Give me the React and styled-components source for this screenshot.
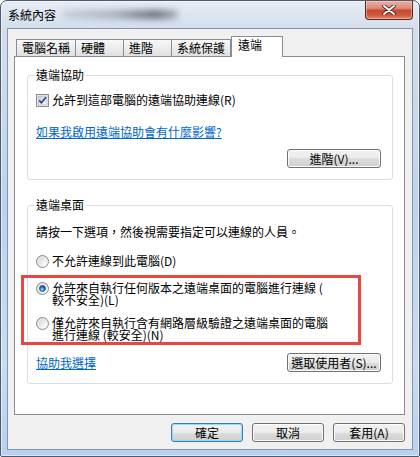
import styled, { createGlobalStyle } from "styled-components";

const GlobalStyle = createGlobalStyle`
  html, body {
    margin: 0;
    padding: 0;
    background: #ffffff;
  }
  body {
    font-family: "Noto Sans CJK TC", "Liberation Sans", sans-serif;
    font-size: 12px;
    color: #000;
  }
`;

const Window = styled.div`
  box-sizing: border-box;
  width: 420px;
  height: 457px;
  border: 1px solid #4f5b6c;
  border-radius: 7px 7px 2px 2px;
  padding: 0 6px 6px;
  display: flex;
  flex-direction: column;
  background: linear-gradient(
    180deg,
    #e6ecf4 0,
    #d3deeb 28px,
    #bcd3ee 45%,
    #c8dcf3 80%,
    #b6d1f0 100%
  );
  box-shadow: inset 0 0 0 1px rgba(255, 255, 255, 0.55);
`;

const TitleBar = styled.div`
  height: 27px;
  display: flex;
  align-items: flex-start;
  flex-shrink: 0;
`;

const Title = styled.span`
  margin: 7px 0 0 1px;
  line-height: 14px;
  font-size: 12px;
  color: #000;
`;

const Smudge = styled.span`
  margin: 9px 0 0 6px;
  width: 116px;
  height: 9px;
  border-radius: 5px;
  background: linear-gradient(
    90deg,
    rgba(140, 150, 165, 0.25),
    rgba(110, 118, 130, 0.45) 45%,
    rgba(70, 76, 88, 0.75) 80%,
    rgba(90, 96, 108, 0.4)
  );
  filter: blur(3px);
`;

const CloseButton = styled.div`
  margin-left: auto;
  box-sizing: border-box;
  width: 48px;
  height: 19px;
  border: 1px solid #5a2620;
  border-top: none;
  border-radius: 0 0 4px 4px;
  display: flex;
  align-items: center;
  justify-content: center;
  background: linear-gradient(
    180deg,
    #eab2a4 0%,
    #dc8a78 40%,
    #c84a33 52%,
    #cf5a40 80%,
    #e08a6a 100%
  );
  box-shadow: inset 0 0 0 1px rgba(255, 220, 210, 0.45);
`;

const Client = styled.div`
  flex: 1;
  display: flex;
  flex-direction: column;
  background: #f0f0f0;
  border: 1px solid #8796ab;
  padding: 7px 7px 7px 6px;
  min-height: 0;
`;

const TabStrip = styled.div`
  display: flex;
  align-items: flex-end;
  height: 21px;
  padding-left: 2px;
  margin-bottom: -1px;
  flex-shrink: 0;
`;

const Tab = styled.div`
  box-sizing: border-box;
  height: ${(p) => (p.$active ? "21px" : "18px")};
  min-width: ${(p) => (p.$active ? "52px" : "49px")};
  padding: 0 ${(p) => (p.$active ? "6px" : "5px")};
  margin-left: ${(p) => (p.$first || p.$active ? "0" : "-1px")};
  border: 1px solid #898c95;
  border-bottom: none;
  line-height: 16px;
  white-space: nowrap;
  background: ${(p) =>
    p.$active ? "#ffffff" : "linear-gradient(180deg, #f8f8f8 0%, #ececec 50%, #dedede 100%)"};
  position: ${(p) => (p.$active ? "relative" : "static")};
  z-index: ${(p) => (p.$active ? 2 : "auto")};
`;

const Panel = styled.div`
  position: relative;
  flex: 1;
  background: #ffffff;
  border: 1px solid #898c95;
  padding: 11px 11px 0 12px;
`;

const Group = styled.fieldset`
  margin: ${(p) => (p.$gap ? "18px 0 0" : "0")};
  padding: 0 11px 11px 8px;
  border: 1px solid #d5dfe5;
  border-radius: 3px;
  min-width: 0;
`;

const Legend = styled.legend`
  padding: 0 2px;
  margin-left: -2px;
  line-height: 14px;
`;

const CheckRow = styled.label`
  display: flex;
  align-items: center;
  gap: 3px;
  margin-top: 11px;
  line-height: 14px;
`;

const Text = styled.div`
  margin-top: ${(p) => p.$mt || 0}px;
  line-height: 14px;
`;

const HelpLink = styled.a`
  display: block;
  width: fit-content;
  margin-top: ${(p) => p.$mt || 0}px;
  line-height: 14px;
  color: #0066cc;
  text-decoration: underline;
  cursor: pointer;
`;

const ButtonRow = styled.div`
  display: flex;
  align-items: center;
  justify-content: ${(p) => (p.$split ? "space-between" : "flex-end")};
  margin-top: ${(p) => p.$mt || 0}px;
`;

const Button = styled.button`
  box-sizing: border-box;
  width: ${(p) => p.$width}px;
  height: 19px;
  padding: 0;
  font-family: inherit;
  font-size: 12px;
  line-height: 17px;
  color: #000;
  border: 1px solid ${(p) => (p.$primary ? "#3c7fb1" : "#707070")};
  border-radius: 3px;
  background: linear-gradient(
    180deg,
    #f2f2f2 0%,
    #ebebeb 50%,
    #dddddd 50%,
    #cfcfcf 100%
  );
  box-shadow: inset 0 0 0 1px ${(p) => (p.$primary ? "#8fdcf6" : "#fcfcfc")};
`;

const RadioRow = styled.label`
  display: flex;
  align-items: ${(p) => (p.$multi ? "flex-start" : "center")};
  gap: 3px;
  margin-top: ${(p) => p.$mt || 0}px;
  line-height: ${(p) => (p.$multi ? "12px" : "14px")};

  svg {
    flex-shrink: 0;
  }
`;

const Highlight = styled.div`
  box-sizing: border-box;
  width: 340px;
  margin: 7px 0 0 -15px;
  padding: 4px 0 1px 12px;
  border: 3px solid #e8463f;
`;

const Footer = styled.div`
  display: flex;
  justify-content: flex-end;
  gap: 9px;
  margin-top: 8px;
  flex-shrink: 0;
`;

function CloseGlyph() {
  return (
    <svg width="14" height="10" viewBox="0 0 14 10">
      <path d="M2 1 L12 9 M12 1 L2 9" stroke="#4a1a14" strokeWidth="3.6" strokeLinecap="round" />
      <path d="M2 1 L12 9 M12 1 L2 9" stroke="#ffffff" strokeWidth="2" strokeLinecap="round" />
    </svg>
  );
}

function CheckBox() {
  return (
    <svg width="13" height="13" viewBox="0 0 13 13">
      <defs>
        <linearGradient id="cbFill" x1="0" y1="0" x2="1" y2="1">
          <stop offset="0" stopColor="#c9ced6" />
          <stop offset="1" stopColor="#f5f6f7" />
        </linearGradient>
      </defs>
      <rect x="0.5" y="0.5" width="12" height="12" fill="#f4f4f4" stroke="#8e8f8f" />
      <rect x="2" y="2" width="9" height="9" fill="url(#cbFill)" stroke="#a8aeb6" strokeWidth="0.6" />
      <path d="M3.2 6.4 L5.4 8.8 L10 3.2" fill="none" stroke="#30458c" strokeWidth="1.7" />
    </svg>
  );
}

function Radio({ checked }) {
  return (
    <svg width="13" height="13" viewBox="0 0 13 13">
      <defs>
        <radialGradient id="rdFill" cx="0.7" cy="0.7" r="0.8">
          <stop offset="0" stopColor="#fbfbfb" />
          <stop offset="1" stopColor="#cdd0d4" />
        </radialGradient>
        <radialGradient id="rdDot" cx="0.45" cy="0.65" r="0.6">
          <stop offset="0" stopColor="#8fe0fb" />
          <stop offset="0.6" stopColor="#1f7fd0" />
          <stop offset="1" stopColor="#0c3e86" />
        </radialGradient>
      </defs>
      <circle cx="6.5" cy="6.5" r="6" fill="url(#rdFill)" stroke="#8b8d90" />
      <circle cx="6.5" cy="6.5" r="4.4" fill="none" stroke="#ffffff" strokeOpacity="0.7" strokeWidth="0.8" />
      {checked && <circle cx="6.5" cy="6.5" r="3" fill="url(#rdDot)" stroke="#183f72" strokeWidth="0.6" />}
    </svg>
  );
}

const tabs = ["電腦名稱", "硬體", "進階", "系統保護", "遠端"];

export default function App() {
  return (
    <>
      <GlobalStyle />
      <Window>
        <TitleBar>
          <Title>系統內容</Title>
          <Smudge />
          <CloseButton>
            <CloseGlyph />
          </CloseButton>
        </TitleBar>
        <Client>
          <TabStrip>
            {tabs.map((name, i) => (
              <Tab key={name} $first={i === 0} $active={name === "遠端"}>
                {name}
              </Tab>
            ))}
          </TabStrip>
          <Panel>
            <Group>
              <Legend>遠端協助</Legend>
              <CheckRow>
                <CheckBox />
                允許到這部電腦的遠端協助連線(R)
              </CheckRow>
              <HelpLink $mt={18}>如果我啟用遠端協助會有什麼影響?</HelpLink>
              <ButtonRow $mt={10}>
                <Button $width={94}>進階(V)...</Button>
              </ButtonRow>
            </Group>

            <Group $gap>
              <Legend>遠端桌面</Legend>
              <Text $mt={13}>請按一下選項，然後視需要指定可以連線的人員。</Text>
              <RadioRow $mt={15}>
                <Radio />
                不允許連線到此電腦(D)
              </RadioRow>
              <Highlight>
                <RadioRow $multi>
                  <Radio checked />
                  <span>
                    允許來自執行任何版本之遠端桌面的電腦進行連線 (
                    <br />
                    較不安全)(L)
                  </span>
                </RadioRow>
                <RadioRow $multi $mt={11}>
                  <Radio />
                  <span>
                    僅允許來自執行含有網路層級驗證之遠端桌面的電腦
                    <br />
                    進行連線 (較安全)(N)
                  </span>
                </RadioRow>
              </Highlight>
              <ButtonRow $split $mt={8}>
                <HelpLink>協助我選擇</HelpLink>
                <Button $width={94}>選取使用者(S)...</Button>
              </ButtonRow>
            </Group>
          </Panel>
          <Footer>
            <Button $width={72} $primary>
              確定
            </Button>
            <Button $width={72}>取消</Button>
            <Button $width={72}>套用(A)</Button>
          </Footer>
        </Client>
      </Window>
    </>
  );
}
